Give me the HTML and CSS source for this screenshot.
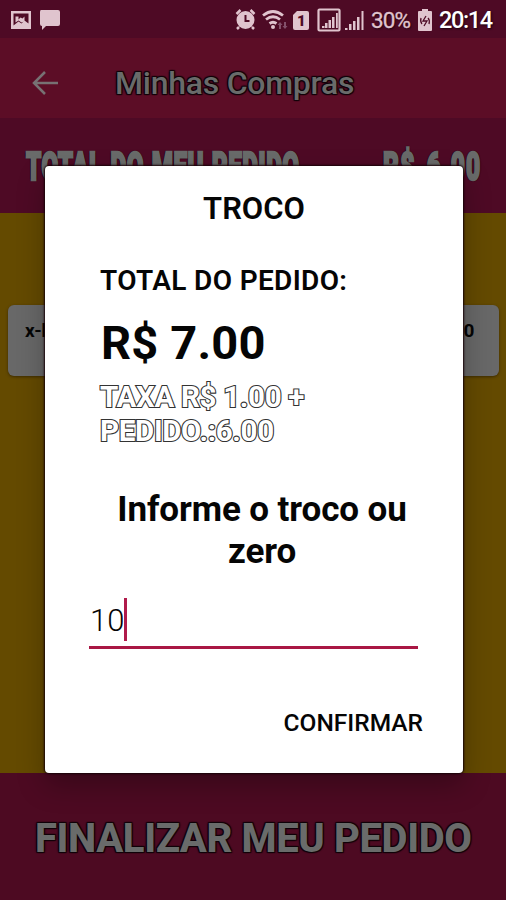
FILE: index.html
```html
<!DOCTYPE html>
<html lang="pt-BR">
<head>
<meta charset="utf-8">
<meta name="viewport" content="width=device-width">
<title>Minhas Compras</title>
<link rel="stylesheet" href="styles.css">
</head>
<body>
<div class="screen">
  <header class="status">
    <svg class="status-left" width="52" height="24" viewBox="0 0 52 24">
      <path fill-rule="evenodd" d="M1 3h20v18H1zM3.500 5.500v12l5-4 3 2 3-3 4 3V5.500z"/>
      <path d="M5.500 8.500h3v3l2-2 2 1 2-2v5l-3 1-3-2-3 2z"/>
      <path d="M31 2h17q2 0 2 2v12q0 2-2 2H36l-4 4v-4q-2 0-2-2V4q0-2 1-2z"/>
    </svg>
    <svg class="status-mid" width="130" height="26" viewBox="0 0 130 26">
      <g class="stroke">
        <path d="M1.500 7l4-4M15.500 3l4 4M4 20l-2 2M17 20l2 2" stroke-width="2.500"/>
        <path d="M28 8.500Q38 .5 48 8.500M31 12.500q7-5.500 14 0M34.500 16.500q3.500-2.500 7 0" stroke-width="2.800"/>
      </g>
      <circle cx="10.500" cy="13" r="9"/>
      <path class="cut" d="M10.500 8v6h4"/>
      <circle cx="38" cy="20" r="2"/>
      <path class="dim" d="M45 15l2.500 3H46v4h-2v-4h-1.500zM50 22l-2.500-3H49v-4h2v4h1.500z"/>
      <path d="M62 4h10q2 0 2 2v15q0 2-2 2H60q-2 0-2-2V8z"/>
      <text class="sim" x="62" y="18.500">1</text>
      <rect class="stroke" x="83.500" y="2.500" width="21" height="21" rx="1" stroke-width="2.200"/>
      <path d="M87 21v-2h2.500v2zM90 21v-5h2.500v5zM93.500 21v-8H96v8zM97 21v-11h2.500v11zM101 21V6h1.800v15z"/>
      <path d="M110 23v-2h2.500v2zM114 23v-6h2.500v6zM118 23v-9h2.500v9zM122 23V10h2.500v13zM126.500 23V4h2v19z"/>
    </svg>
    <span class="percent">30%</span>
    <svg class="battery" width="14" height="22" viewBox="0 0 14 22">
      <path d="M4 0h6v2h3q1 0 1 1v18q0 1-1 1H1q-1 0-1-1V3q0-1 1-1h3z"/>
      <path class="cut thin" d="M8 7l-3 5h4l-3 5M3 9q-1 4 1 6M11 15q1-4-1-6"/>
    </svg>
    <span class="clock">20:14</span>
  </header>
  <nav class="appbar">
    <svg class="back" width="28" height="28" viewBox="0 0 28 28"><path d="M14 3L3 14l11 11M3 14h24"/></svg>
    <h1 class="title shaded">Minhas Compras</h1>
  </nav>
  <section class="summary">
    <span class="narrow label shaded">TOTAL DO MEU PEDIDO</span>
    <span class="narrow price shaded">R$ 6.00</span>
  </section>
  <main class="list">
    <div class="item"><span>x-b</span><span>0</span></div>
  </main>
  <footer class="finish"><span class="shaded">FINALIZAR MEU PEDIDO</span></footer>
  <div class="dialog">
    <h2 class="dialog-title"><span>TROCO</span></h2>
    <p class="total-label"><span>TOTAL DO PEDIDO:</span></p>
    <p class="total"><span>R$ 7.00</span></p>
    <p class="fee"><span>TAXA R$ 1.00 +</span><br><span>PEDIDO.:6.00</span></p>
    <p class="prompt"><span>Informe o troco ou</span><br><span>zero</span></p>
    <div class="field"><span>10</span><i class="caret"></i></div>
    <div class="actions"><span>CONFIRMAR</span></div>
  </div>
</div>
</body>
</html>
```
FILE: styles.css
```css
* { box-sizing: border-box; }
body, h1, h2, p { margin: 0; }
body { font-family: Roboto, "Liberation Sans", sans-serif; color: #050505; }
.screen {
  position: relative;
  width: 506px;
  height: 900px;
  overflow: hidden;
  display: flex;
  flex-direction: column;
  background: #4d0a25;
  white-space: nowrap;
}
.shaded {
  color: #696b6a;
  text-shadow: 0 0 1px #100309, 1px 1px 1px #100309, -1px -1px 1px #100309, 1px -1px 1px #100309, -1px 1px 1px #100309;
}
.status {
  height: 38px;
  flex: none;
  display: flex;
  align-items: center;
  padding: 2px 0 0 10px;
  background: #4e0a25;
  fill: #e0c4ce;
  color: #e0c4ce;
}
.status-mid { margin-left: 173px; }
.stroke { fill: none; stroke: #e0c4ce; }
.cut { fill: none; stroke: #4e0a25; stroke-width: 2; }
.thin { stroke-width: 1.300; }
.dim { fill: #83506a; }
.sim { font-size: 15px; font-weight: 900; fill: #4e0a25; }
.percent { width: 41px; margin-left: 6px; font-size: 22.500px; letter-spacing: -0.9px; -webkit-text-stroke: .3px #e0c4ce; text-shadow: 1px 1px 2px #1b0410; }
.battery { margin-left: 6px; }
.clock { margin-left: 7px; font-size: 23.500px; font-weight: 500; letter-spacing: -1.4px; color: #fff; text-shadow: 1px 1px 2px #1b0410; }
.appbar {
  height: 80px;
  flex: none;
  display: flex;
  align-items: center;
  padding: 10px 0 0 31px;
  background: #5c0d26;
}
.back { fill: none; stroke: #777173; stroke-width: 2.500; }
.title { margin-left: 56px; font-size: 32px; line-height: 40px; font-weight: 500; letter-spacing: -.25px; }
.summary {
  height: 95px;
  flex: none;
  display: flex;
  justify-content: space-between;
  align-items: center;
  padding: 2px 23px 0 26px;
  background: #4e0a25;
}
.narrow { width: 276px; font-size: 38px; font-weight: 900; -webkit-text-stroke: 2.500px #696b6a; }
.label { word-spacing: 2px; letter-spacing: .8px; transform: scaleX(.637); transform-origin: left; }
.price { width: 100px; word-spacing: 6px; letter-spacing: 2px; transform: scaleX(.64); transform-origin: left; }
.list { height: 560px; flex: none; padding: 92px 7px 0 8px; background: #644a00; }
.item {
  height: 71px;
  display: flex;
  justify-content: space-between;
  padding: 14px 25px 0 17px;
  border-radius: 6px;
  background: #686868;
  font-size: 19px;
  line-height: 24px;
  letter-spacing: -.3px;
  font-weight: 700;
  box-shadow: 0 1px 3px #3d2c00;
}
.finish {
  flex: 1;
  padding: 41px 0 0 35px;
  background: #4d0a22;
  font-size: 40px;
  line-height: 50px;
  font-weight: 800;
  letter-spacing: -.38px;
}
.dialog {
  position: absolute;
  left: 45px;
  top: 166px;
  width: 418px;
  height: 607px;
  padding-top: 22px;
  border-radius: 4px;
  background: #fff;
  box-shadow: 0 0 2px 1px #180308, 0 12px 28px rgba(0, 0, 0, .28);
}
.dialog-title { text-align: center; font-size: 31px; line-height: 42px; font-weight: 600; }
.total-label { margin: 32px 0 0 55px; font-size: 28px; line-height: 38px; font-weight: 600; letter-spacing: .35px; }
.total { margin: 13px 0 0 56px; font-size: 47px; line-height: 60px; font-weight: 700; letter-spacing: .2px; }
.fee {
  margin: 8px 0 0 55px;
  font-size: 29.500px;
  line-height: 33.500px;
  font-weight: 700;
  letter-spacing: -.3px;
  color: #fff;
  -webkit-text-stroke: 2.200px #333;
  paint-order: stroke fill;
}
.prompt { margin: 41px 0 0 16px; text-align: center; font-size: 35px; line-height: 41.500px; font-weight: 700; letter-spacing: -.1px; }
.field {
  width: 329px;
  height: 51px;
  margin: 26px 0 0 44px;
  padding-left: 1px;
  display: flex;
  align-items: flex-start;
  border-bottom: 3px solid #a91744;
  font-size: 31px;
  font-weight: 350;
  line-height: 46px;
}
.caret { width: 3px; height: 43px; background: #b01b4b; }
.actions { margin: 54px 40px 0 0; text-align: right; font-size: 24.500px; line-height: 40px; font-weight: 500; }
```
